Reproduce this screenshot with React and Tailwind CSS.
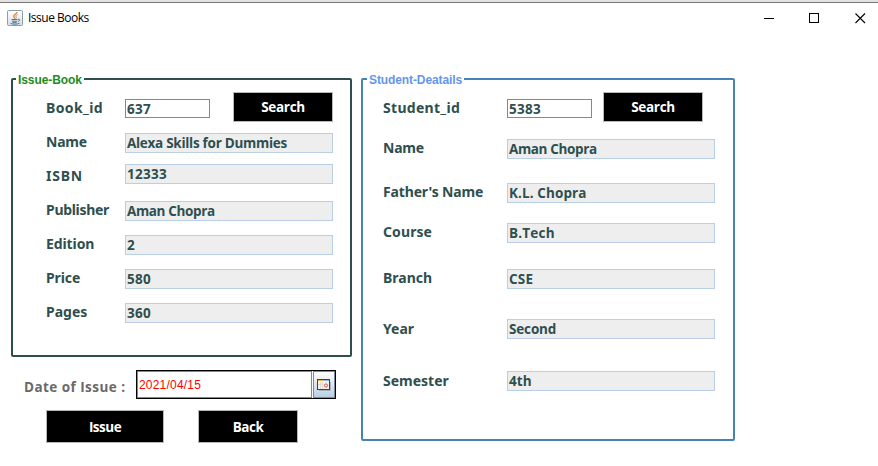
const bookLabels = [
  { text: "Book_id", cls: "tracking-[0.4px]" },
  { text: "Name", cls: "tracking-[-0.2px]" },
  { text: "ISBN", cls: "tracking-[0.75px]" },
  { text: "Publisher", cls: "tracking-[-0.3px]" },
  { text: "Edition", cls: "tracking-[-0.1px]" },
  { text: "Price", cls: "tracking-[-0.1px]" },
  { text: "Pages", cls: "" },
];

const bookFields = [
  { text: "Alexa Skills for Dummies", cls: "mt-[15px] tracking-[-0.28px]" },
  { text: "12333", cls: "mt-[11px] tracking-[0.3px]" },
  { text: "Aman Chopra", cls: "mt-[17px] tracking-[-0.37px]" },
  { text: "2", cls: "mt-[14px]" },
  { text: "580", cls: "mt-[14px] tracking-[0.3px]" },
  { text: "360", cls: "mt-[14px] tracking-[0.3px]" },
];

const studentLabels = [
  { text: "Student_id", cls: "tracking-[0.3px]" },
  { text: "Name", cls: "mt-5 tracking-[-0.2px]" },
  { text: "Father's Name", cls: "mt-6 tracking-[-0.15px]" },
  { text: "Course", cls: "mt-5 tracking-[0.1px]" },
  { text: "Branch", cls: "mt-[26px]" },
  { text: "Year", cls: "mt-[31px]" },
  { text: "Semester", cls: "mt-8" },
];

const studentFields = [
  { text: "Aman Chopra", cls: "mt-[21px] tracking-[-0.37px]" },
  { text: "K.L. Chopra", cls: "mt-6 tracking-[0.1px]" },
  { text: "B.Tech", cls: "mt-5 tracking-[0.2px]" },
  { text: "CSE", cls: "mt-[26px] tracking-[0.2px]" },
  { text: "Second", cls: "mt-[30px] tracking-[-0.15px]" },
  { text: "4th", cls: "mt-8 tracking-[0.1px]" },
];

function IdField({ value }) {
  return (
    <div className="flex h-[19px] w-[85px] items-center border border-[#7a8a99] bg-white pl-px pt-px text-[13.5px] leading-[14px] tracking-[0.3px]">
      {value}
    </div>
  );
}

function ReadOnlyField({ text, cls }) {
  return (
    <div className={`flex h-5 w-[208px] items-center whitespace-nowrap border border-[#b8cfe5] bg-[#eeeeee] pl-px text-[13.5px] leading-[14px] ${cls}`}>
      {text}
    </div>
  );
}

function BlackButton({ children, cls }) {
  return (
    <button className={`flex items-center justify-center border border-[#b8b8b8] bg-black font-['Open_Sans',sans-serif] text-[13.5px] font-bold leading-[14px] text-white ${cls}`}>
      {children}
    </button>
  );
}

function JavaIcon() {
  return (
    <svg width="16" height="16" viewBox="0 0 16 16" fill="none">
      <defs>
        <linearGradient id="tile" x1="0" y1="0" x2="0" y2="1">
          <stop offset="0" stopColor="#ffffff" />
          <stop offset="1" stopColor="#d5dee8" />
        </linearGradient>
      </defs>
      <rect x="0.5" y="0.5" width="15" height="15" rx="1" fill="url(#tile)" stroke="#8b9cac" />
      <path d="M10 2C10 4 6.2 4.700 6.800 6.600C7.100 7.400 7.800 7.800 7.600 8.600" stroke="#e8832a" strokeWidth="1.300" />
      <path d="M10.500 4.500C8.500 5.500 8.700 6.300 9.300 7.200C9.500 7.800 9 8.300 8.500 8.700" stroke="#e8832a" strokeWidth="0.9" />
      <path d="M4.500 9.500H10.500M5 11.200H10M11 9.300C13.300 8.700 13.300 11 10.800 11.500M5.500 12.600H9.500M3.500 13.300C5.500 14.500 10.500 14.400 12.500 13.200" stroke="#4d7596" strokeWidth="1" />
    </svg>
  );
}

function CalendarIcon() {
  return (
    <svg width="14" height="12" viewBox="0 0 14 12" fill="none" shapeRendering="crispEdges">
      <path d="M2 11.500H13.500V3" stroke="#a9b4c0" />
      <rect x="0.5" y="0.5" width="12" height="10" fill="#f4f2ef" stroke="#3f3f3f" />
      <rect x="1" y="1" width="5" height="1" fill="#f5b83d" />
      <rect x="6" y="1" width="6" height="1" fill="#8fb8e8" />
      <path d="M3.500 3V10M5.500 3V10M1 5.500H6" stroke="#dedbd8" />
      <circle cx="9" cy="6.500" r="1.600" stroke="#e0524a" shapeRendering="auto" />
    </svg>
  );
}

function Labels({ items, row, cls }) {
  return (
    <div className={`flex flex-col font-['Noto_Sans',sans-serif] ${cls}`}>
      {items.map((l) => (
        <div key={l.text} className={`flex items-center whitespace-nowrap text-[14px] leading-none ${row} ${l.cls}`}>
          {l.text}
        </div>
      ))}
    </div>
  );
}

export default function App() {
  return (
    <div className="flex h-[466px] w-[878px] flex-col overflow-hidden bg-white font-['Open_Sans',sans-serif]">
      <header className="flex h-[33px] shrink-0 items-start border-t-2 border-[#e3e3e3]">
        <div className="flex h-[31px] w-full items-center border-t border-[#777777] pl-[7px] pr-3">
          <JavaIcon />
          <span className="ml-[5px] whitespace-nowrap text-[12px] tracking-[-0.5px] text-black">Issue Books</span>
          <svg className="ml-auto" width="102" height="11" viewBox="0 0 102 11" fill="none" stroke="#000" shapeRendering="crispEdges">
            <path d="M0 5.500H10" />
            <rect x="45.500" y="0.500" width="9" height="9" />
            <path d="M91.500 0.500L101 10M101 0.500L91.500 10" shapeRendering="auto" strokeWidth="1.100" />
          </svg>
        </div>
      </header>

      <main className="flex items-start pl-[11px] pt-[45px] font-bold text-[#2f4f4f]">
        <div className="flex w-[341px] flex-col">
          <section className="relative flex h-[279px] rounded-[2px] border-2 border-[#2f4f4f] pl-[33px]">
            <h2 className="absolute -top-[7px] left-[3px] bg-white px-[2px] font-['Liberation_Sans',sans-serif] text-[12px] leading-[14px] tracking-[-0.08px] text-[#228b22]">Issue-Book</h2>
            <Labels items={bookLabels} row="h-[34px]" cls="w-[79px] pt-[11px]" />
            <div className="flex flex-col pt-3">
              <div className="flex h-[30px] w-[208px] items-start justify-between">
                <div className="pt-[7px]"><IdField value="637" /></div>
                <BlackButton cls="h-[30px] w-[100px] tracking-[-0.3px]">Search</BlackButton>
              </div>
              <div className="-mt-1 flex flex-col">
                {bookFields.map((f) => <ReadOnlyField key={f.text} {...f} />)}
              </div>
            </div>
          </section>

          <div className="mt-[13px] flex items-start pl-[13px]">
            <span className="w-[112px] whitespace-nowrap pt-[10px] text-[13.5px] leading-[14px] tracking-[0.45px] text-[#696969]">Date of Issue :</span>
            <div className="flex h-[29px] w-[200px] gap-px border border-black bg-white">
              <div className="flex w-[175px] items-center border border-[#7a8a99] pl-px font-['Liberation_Sans',sans-serif] text-[12px] font-normal tracking-[0.2px] text-[#ff0000]">2021/04/15</div>
              <div className="flex flex-1 items-center justify-center border border-[#7a8a99] bg-linear-to-b from-white to-[#b8cfe5]">
                <CalendarIcon />
              </div>
            </div>
          </div>

          <div className="mt-[11px] flex gap-[34px] pl-[35px]">
            <BlackButton cls="h-[33px] w-[118px] tracking-[-0.5px]">Issue</BlackButton>
            <BlackButton cls="h-[33px] w-[100px] tracking-[-0.5px]">Back</BlackButton>
          </div>
        </div>

        <section className="relative ml-[9px] flex h-[363px] w-[374px] rounded-[2px] border-2 border-[#4682b4] pl-5">
          <h2 className="absolute -top-[7px] left-1 bg-white px-[2px] font-['Liberation_Sans',sans-serif] text-[12px] leading-[14px] tracking-[-0.1px] text-[#6495ed]">Student-Deatails</h2>
          <Labels items={studentLabels} row="h-5" cls="w-[124px] pt-[18px]" />
          <div className="flex flex-col pt-3">
            <div className="flex h-[30px] w-[208px] items-start gap-[11px]">
              <div className="pt-[7px]"><IdField value="5383" /></div>
              <BlackButton cls="h-[30px] w-[100px] tracking-[-0.3px]">Search</BlackButton>
            </div>
            <div className="-mt-1 flex flex-col">
              {studentFields.map((f) => <ReadOnlyField key={f.text} {...f} />)}
            </div>
          </div>
        </section>
      </main>
    </div>
  );
}
